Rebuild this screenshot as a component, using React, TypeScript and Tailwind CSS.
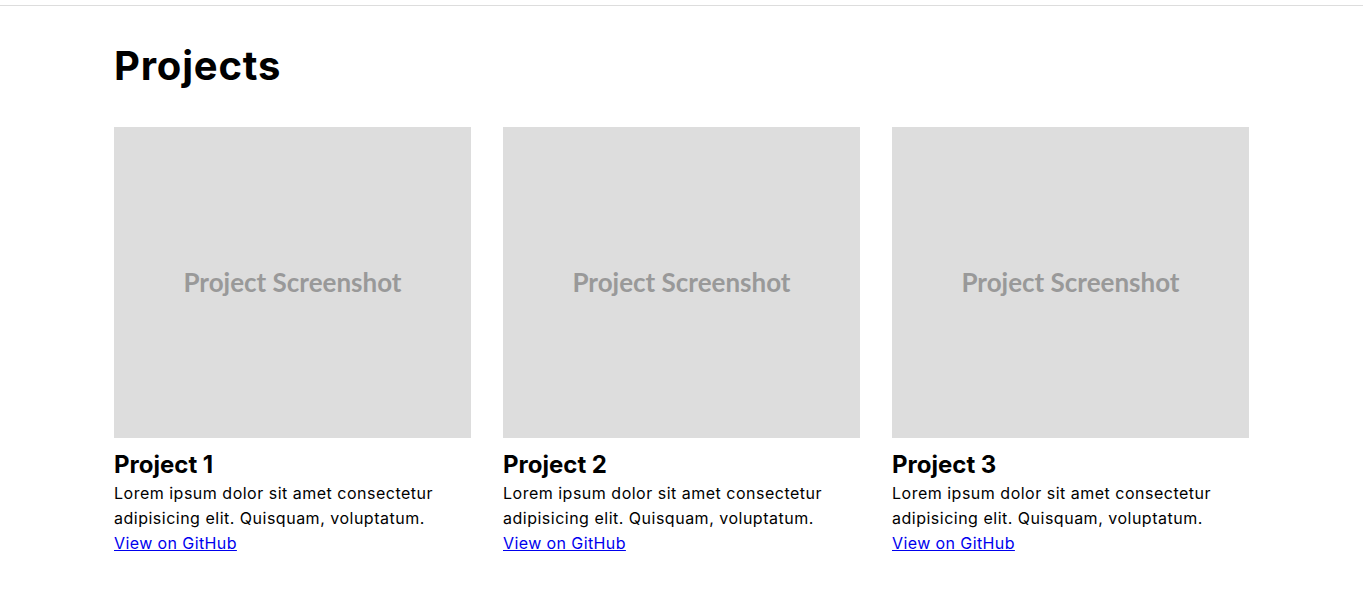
const projects = [
  { title: 'Project 1' },
  { title: 'Project 2' },
  { title: 'Project 3' },
];

export default function App() {
  return (
    <div className="min-h-screen bg-white text-black font-['Inter',sans-serif]">
      <div className="h-[6px] border-b border-[#dddddd]"></div>

      <section className="px-[114px] pt-[30px]">
        <h2 className="text-[40px] font-bold leading-[60px] tracking-[0.8px]">Projects</h2>

        <div className="mt-[31px] grid grid-cols-3 gap-8">
          {projects.map((p) => (
            <div key={p.title} className="flex flex-col">
              <div className="h-[311px] bg-[#dddddd] flex items-center justify-center">
                <span className="font-['Lato',sans-serif] font-bold text-[26px] text-[#999999]">Project Screenshot</span>
              </div>
              <h3 className="mt-[11px] text-[24px] font-bold leading-[32px]">{p.title}</h3>
              <p className="text-[16px] leading-[25px] tracking-[0.5px]">
                Lorem ipsum dolor sit amet consectetur
                <br />
                adipisicing elit. Quisquam, voluptatum.
              </p>
              <a href="#" className="text-[16px] leading-[25px] tracking-[0.4px] text-[#0000ee] underline self-start">
                View on GitHub
              </a>
            </div>
          ))}
        </div>
      </section>
    </div>
  );
}
